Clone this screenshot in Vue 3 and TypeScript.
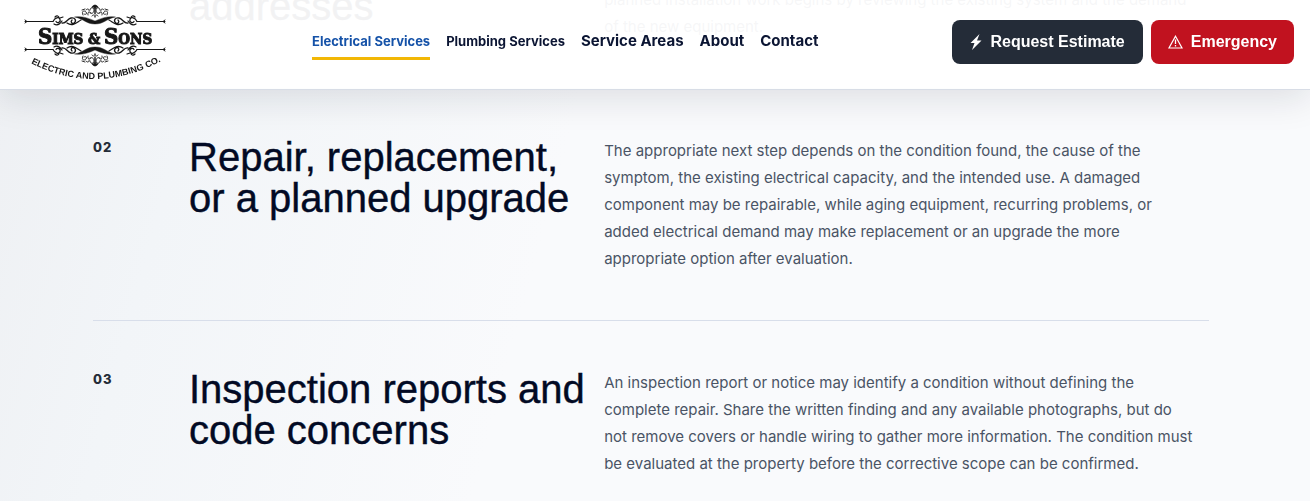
<script setup lang="ts">
interface NavItem {
  label: string
  compact?: boolean
  active?: boolean
}

interface Topic {
  number: string
  title: string[]
  body: string[]
}

const navItems: NavItem[] = [
  { label: 'Electrical Services', compact: true, active: true },
  { label: 'Plumbing Services', compact: true },
  { label: 'Service Areas' },
  { label: 'About' },
  { label: 'Contact' },
]

const topics: Topic[] = [
  {
    number: '',
    title: ['addresses'],
    body: [
      'planned installation work begins by reviewing the existing system and the demand',
      'of the new equipment.',
    ],
  },
  {
    number: '02',
    title: ['Repair, replacement,', 'or a planned upgrade'],
    body: [
      'The appropriate next step depends on the condition found, the cause of the',
      'symptom, the existing electrical capacity, and the intended use. A damaged',
      'component may be repairable, while aging equipment, recurring problems, or',
      'added electrical demand may make replacement or an upgrade the more',
      'appropriate option after evaluation.',
    ],
  },
  {
    number: '03',
    title: ['Inspection reports and', 'code concerns'],
    body: [
      'An inspection report or notice may identify a condition without defining the',
      'complete repair. Share the written finding and any available photographs, but do',
      'not remove covers or handle wiring to gather more information. The condition must',
      'be evaluated at the property before the corrective scope can be confirmed.',
    ],
  },
]
</script>

<template>
  <div class="page">
    <header class="site-header">
      <a class="brand" href="#" aria-label="Sims &amp; Sons Electric and Plumbing Co.">
        <svg width="142" height="78" viewBox="0 1 142 78" aria-hidden="true">
          <defs>
            <path id="tagline-arc" d="M1 58 Q71 97 143 56" />
            <g id="scroll-half" fill="none" stroke="#171717" stroke-linecap="round">
              <path d="M1 19.500H29" stroke-width="1" />
              <path d="M1 18l2 1.500-2 1.500" stroke-width="1" />
              <path d="M29 19.500c2-4 6-5 7-2s-3 4-4 2M31 15c2-2 4-1 4 1M30 22c3 2 6 0 8-3M36 16l3-1" stroke-width="1.200" />
              <path d="M38 21c4 1 5-4 9-5 4-1 6 3 3 5-2 1-4-1-2-3M43 21c6 4 10-1 14-3" stroke-width="1.300" />
              <path d="M51 15c5-1 11 0 20 4v3c-9 0-11-5-20-7z" fill="#171717" stroke-width="0.400" />
              <path d="M59 13c-2-4 1-5 3-3s-1 3-2 2M64 13c-1-3 2-4 3-2M58 8l3-1M62 8c1-2 4-1 3 1M66 8c0-3 4-3 4 0s-2 4-4 3M71 6v6M68 14c1-2 3-1 3 1" stroke-width="0.900" />
              <path d="M68 5c1-2 3-2 3-2v3z" fill="#171717" stroke-width="0.600" />
            </g>
            <g id="scroll-full">
              <use href="#scroll-half" />
              <use href="#scroll-half" transform="translate(142 0) scale(-1 1)" />
            </g>
          </defs>
          <use href="#scroll-full" />
          <use href="#scroll-full" transform="translate(0 67) scale(1 -1)" />
          <g class="brand-name">
            <text x="14" y="42"><tspan class="cap">S</tspan>IMS</text>
            <text x="64" y="42">&amp;</text>
            <text x="80" y="42"><tspan class="cap">S</tspan>ONS</text>
          </g>
          <text class="brand-tagline">
            <textPath href="#tagline-arc" startOffset="50%" text-anchor="middle">ELECTRIC AND PLUMBING CO.</textPath>
          </text>
        </svg>
      </a>

      <nav class="nav" aria-label="Main">
        <a
          v-for="item in navItems"
          :key="item.label"
          href="#"
          class="nav-link"
          :class="{ compact: item.compact, active: item.active }"
          :aria-current="item.active ? 'page' : undefined"
        >{{ item.label }}</a>
      </nav>

      <div class="actions">
        <a class="button estimate" href="#">
          <svg width="12" height="16" viewBox="0 0 12 16" aria-hidden="true">
            <path d="M9.500 0 0.500 9h4L2 16l9.500-9.500H7z" fill="currentColor" />
          </svg>
          Request Estimate
        </a>
        <a class="button emergency" href="#">
          <svg width="15" height="14" viewBox="0 0 15 14" aria-hidden="true">
            <path d="M7.500 1.200 14 13H1z" fill="none" stroke="currentColor" stroke-width="1.200" />
            <path d="M7.500 4.500v4.500M7.500 10v1.500" stroke="currentColor" stroke-width="1.300" />
          </svg>
          Emergency
        </a>
      </div>
    </header>

    <main class="topics">
      <article v-for="topic in topics" :key="topic.title[0]" class="topic">
        <span class="number">{{ topic.number }}</span>
        <h2 class="title">
          <template v-for="(line, i) in topic.title" :key="line"><br v-if="i > 0">{{ line }}</template>
        </h2>
        <p class="body">
          <template v-for="(line, i) in topic.body" :key="line"><br v-if="i > 0">{{ line }}</template>
        </p>
      </article>
    </main>
  </div>
</template>

<style>
body {
  margin: 0;
  overflow: hidden;
}
</style>

<style scoped>
.page {
  height: 100vh;
  overflow: hidden;
  background: linear-gradient(105deg, #eef0f3 0%, #f2f5f8 15%, #f9fafc 42%, #f9fafc 100%);
  color: #020a24;
  font-family: "Liberation Sans", Arial, sans-serif;
}

.site-header {
  position: fixed;
  inset: 0 0 auto;
  z-index: 1;
  box-sizing: border-box;
  height: 90px;
  display: flex;
  align-items: center;
  padding: 0 16px 5px 24px;
  background: rgba(255, 255, 255, 0.95);
  border-bottom: 1px solid #d8dde6;
  box-shadow: 0 8px 36px rgba(15, 23, 42, 0.12);
}

.brand {
  display: block;
  height: 78px;
  flex: none;
}

.brand-name {
  fill: #171717;
  stroke: #171717;
  stroke-width: 1;
  font: bold 15px "DejaVu Serif Condensed", "DejaVu Serif", serif;
}

.cap {
  font-size: 22px;
}

.brand-tagline {
  fill: #171717;
  font: bold 9px "Liberation Sans", sans-serif;
}

.nav {
  display: flex;
  align-items: center;
  gap: 16px;
  margin-left: 146px;
}

.nav-link {
  padding: 4px 0;
  border-bottom: 3px solid transparent;
  color: #0b1533;
  font: 700 15px/24px Inter, sans-serif;
  text-decoration: none;
  white-space: nowrap;
}

.nav-link.compact {
  font-size: 13px;
}

.nav-link.active {
  color: #1552a8;
  border-bottom-color: #f2b705;
}

.actions {
  display: flex;
  gap: 8px;
  margin-left: auto;
}

.button {
  display: flex;
  align-items: center;
  gap: 8px;
  height: 44px;
  padding: 0 17px;
  border-radius: 8px;
  color: #fff;
  font: bold 16px/24px "Liberation Sans", Arial, sans-serif;
  text-decoration: none;
  white-space: nowrap;
}

.estimate {
  padding: 0 18px;
  background: #242c38;
}

.emergency {
  background: #c1121f;
}

.topics {
  margin-top: -14px;
  padding: 0 101px 0 93px;
}

.topic {
  display: grid;
  grid-template-columns: 80px 33fr 50fr;
  column-gap: 16px;
  padding-bottom: 48px;
}

.topic + .topic {
  padding-top: 48px;
  border-top: 1px solid #d8deea;
}

.number {
  color: #242c38;
  font: 800 13px/20px Inter, sans-serif;
  letter-spacing: 1px;
}

.title {
  margin: 0;
  font-size: 40px;
  font-weight: 400;
  line-height: 41px;
  white-space: nowrap;
  -webkit-text-stroke: 0.4px currentColor;
}

.body {
  margin: 0;
  color: #4a5465;
  font: 400 15px/27px Inter, sans-serif;
  white-space: nowrap;
}
</style>
